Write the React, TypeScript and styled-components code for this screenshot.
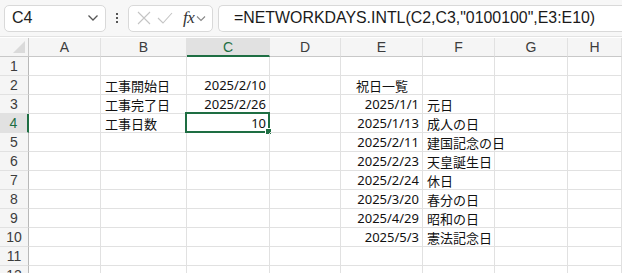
import React from 'react';
import styled, { createGlobalStyle, css } from 'styled-components';

const GlobalStyle = createGlobalStyle`
  html, body {
    margin: 0;
    padding: 0;
    background: #ffffff;
  }
  body {
    font-family: "Noto Sans", "Noto Sans CJK JP", sans-serif;
    overflow: hidden;
  }
`;

const Wrapper = styled.div`
  width: 622px;
  height: 273px;
  overflow: hidden;
  background: #ffffff;
`;

const Toolbar = styled.div`
  height: 37px;
  box-sizing: border-box;
  display: flex;
  align-items: center;
  padding: 0 0 0 4px;
  background: #f7f7f7;
  border-bottom: 1px solid #e3e3e3;
`;

const Box = styled.div`
  height: 27px;
  box-sizing: border-box;
  background: #ffffff;
  border: 1px solid #d9d9d9;
  border-radius: 5px;
  display: flex;
  align-items: center;
`;

const NameBox = styled(Box)`
  width: 102px;
  padding: 0 6px 0 7px;
  justify-content: space-between;
  font-family: "Liberation Sans", Arial, sans-serif;
  font-size: 16px;
  color: #222;
`;

const Dots = styled.div`
  width: 22px;
  display: flex;
  flex-direction: column;
  align-items: center;
  gap: 2px;
  span {
    width: 2px;
    height: 2px;
    background: #555;
  }
`;

const FxBox = styled(Box)`
  width: 85px;
  padding: 0 4px 0 8px;
  gap: 6px;
`;

const FxText = styled.span`
  font-family: "Liberation Serif", "DejaVu Serif", serif;
  font-style: italic;
  font-size: 17px;
  color: #333;
  margin-left: 4px;
  letter-spacing: -0.5px;
`;

const FormulaBox = styled(Box)`
  flex: 1;
  margin-left: 5px;
  border-right: none;
  border-radius: 5px 0 0 5px;
  padding-left: 15px;
  font-family: "Liberation Sans", Arial, sans-serif;
  font-size: 15.9px;
  color: #1a1a1a;
  white-space: nowrap;
  overflow: hidden;
`;

const Grid = styled.div`
  display: grid;
  grid-template-columns: 29px 72px 86px 83px 71px 82px 72px 73px 54px;
  grid-auto-rows: 19px;
  margin-top: 1px;
`;

const HeaderCell = styled.div<{ $active?: boolean }>`
  box-sizing: border-box;
  background: #f5f5f5;
  border-right: 1px solid #e1e1e1;
  border-bottom: 1px solid #c8c8c8;
  display: flex;
  align-items: center;
  justify-content: center;
  font-family: "Liberation Sans", Arial, sans-serif;
  font-size: 14px;
  color: #3c3c3c;
  ${(p) =>
    p.$active &&
    css`
      background: #e1e1e1;
      color: #1e6e43;
      border-bottom: 2px solid #1e6e43;
    `}
`;

const Corner = styled(HeaderCell)`
  position: relative;
  border-right: 1px solid #c8c8c8;
  svg {
    position: absolute;
    right: 3px;
    bottom: 3px;
  }
`;

const RowHeader = styled.div<{ $active?: boolean }>`
  box-sizing: border-box;
  background: #f5f5f5;
  border-right: 1px solid #b8b8b8;
  border-bottom: 1px solid #e1e1e1;
  display: flex;
  align-items: center;
  justify-content: center;
  font-family: "Liberation Sans", Arial, sans-serif;
  font-size: 14px;
  color: #3c3c3c;
  ${(p) =>
    p.$active &&
    css`
      background: #e1e1e1;
      color: #1e6e43;
      border-right: 2px solid #1e6e43;
    `}
`;

const Cell = styled.div<{ $align?: 'left' | 'right' | 'center' }>`
  position: relative;
  box-sizing: border-box;
  border-right: 1px solid #e1e1e1;
  border-bottom: 1px solid #e1e1e1;
  display: flex;
  align-items: center;
  justify-content: ${(p) =>
    p.$align === 'right' ? 'flex-end' : p.$align === 'center' ? 'center' : 'flex-start'};
  padding: 0 3px 0 4px;
  font-size: 13px;
  color: #111;
  white-space: nowrap;
  overflow: visible;
`;

const Selection = styled.div`
  position: absolute;
  left: -2px;
  top: -2px;
  right: -1px;
  bottom: -1px;
  border: 2px solid #1e6e43;
  pointer-events: none;
  &::after {
    content: '';
    position: absolute;
    right: -4px;
    bottom: -4px;
    width: 5px;
    height: 5px;
    background: #1e6e43;
    border: 1px solid #ffffff;
  }
`;

type Align = 'left' | 'right' | 'center';
type CellData = { text?: string; align?: Align };

const columns = ['A', 'B', 'C', 'D', 'E', 'F', 'G', 'H'];

const rows: Record<number, Record<string, CellData>> = {
  2: { B: { text: '工事開始日' }, C: { text: '2025/2/10', align: 'right' }, E: { text: '祝日一覧', align: 'center' } },
  3: { B: { text: '工事完了日' }, C: { text: '2025/2/26', align: 'right' }, E: { text: '2025/1/1', align: 'right' }, F: { text: '元日' } },
  4: { B: { text: '工事日数' }, C: { text: '10', align: 'right' }, E: { text: '2025/1/13', align: 'right' }, F: { text: '成人の日' } },
  5: { E: { text: '2025/2/11', align: 'right' }, F: { text: '建国記念の日' } },
  6: { E: { text: '2025/2/23', align: 'right' }, F: { text: '天皇誕生日' } },
  7: { E: { text: '2025/2/24', align: 'right' }, F: { text: '休日' } },
  8: { E: { text: '2025/3/20', align: 'right' }, F: { text: '春分の日' } },
  9: { E: { text: '2025/4/29', align: 'right' }, F: { text: '昭和の日' } },
  10: { E: { text: '2025/5/3', align: 'right' }, F: { text: '憲法記念日' } },
};

const rowNumbers = Array.from({ length: 12 }, (_, i) => i + 1);

const App = () => {
  return (
    <Wrapper>
      <GlobalStyle />
      <Toolbar>
        <NameBox>
          <span>C4</span>
          <svg width="12" height="8" viewBox="0 0 12 8">
            <path d="M1.5 1.5 L6 6 L10.5 1.5" fill="none" stroke="#555" strokeWidth="1.3" />
          </svg>
        </NameBox>
        <Dots>
          <span />
          <span />
          <span />
        </Dots>
        <FxBox>
          <svg width="14" height="14" viewBox="0 0 14 14">
            <path d="M1 1 L13 13 M13 1 L1 13" stroke="#c4c4c4" strokeWidth="1.1" />
          </svg>
          <svg width="16" height="14" viewBox="0 0 16 14">
            <path d="M1 7 L6 12 L15 2" fill="none" stroke="#c4c4c4" strokeWidth="1.1" />
          </svg>
          <FxText>fx</FxText>
          <svg width="10" height="7" viewBox="0 0 10 7" style={{ marginLeft: -4 }}>
            <path d="M1 1.5 L5 5.5 L9 1.5" fill="none" stroke="#888" strokeWidth="1.1" />
          </svg>
        </FxBox>
        <FormulaBox>=NETWORKDAYS.INTL(C2,C3,"0100100",E3:E10)</FormulaBox>
      </Toolbar>
      <Grid>
        <Corner>
          <svg width="12" height="12" viewBox="0 0 12 12">
            <path d="M12 0 L12 12 L0 12 Z" fill="#dadada" />
          </svg>
        </Corner>
        {columns.map((c) => (
          <HeaderCell key={c} $active={c === 'C'}>
            {c}
          </HeaderCell>
        ))}
        {rowNumbers.map((r) => (
          <React.Fragment key={r}>
            <RowHeader $active={r === 4}>{r}</RowHeader>
            {columns.map((c) => {
              const d = rows[r]?.[c];
              return (
                <Cell key={c} $align={d?.align}>
                  {d?.text}
                  {r === 4 && c === 'C' && <Selection />}
                </Cell>
              );
            })}
          </React.Fragment>
        ))}
      </Grid>
    </Wrapper>
  );
};

export default App;
